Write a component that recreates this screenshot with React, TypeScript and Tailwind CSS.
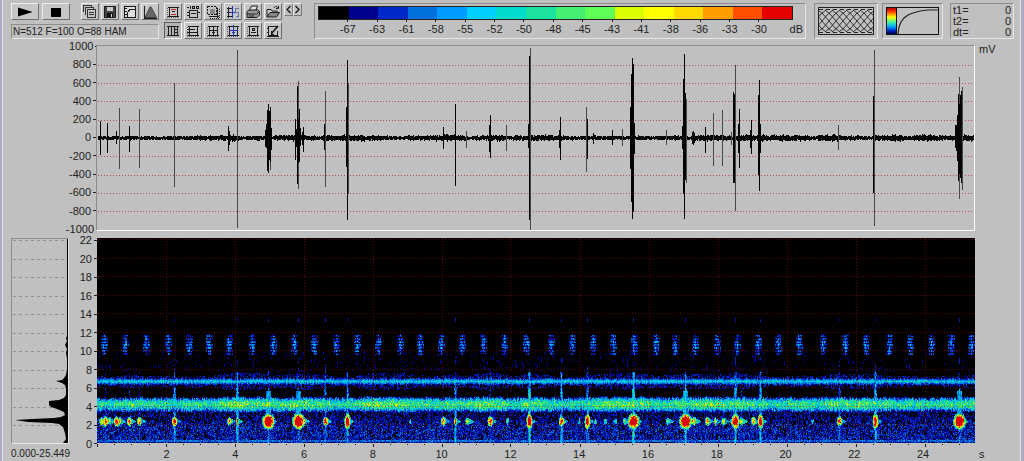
import type { ReactNode } from 'react';

const WIDTH = 877;
const WAVE_HEIGHT = 184;
const SPEC_HEIGHT = 205;
const PX_PER_SECOND = 34.45;

const scale = [
  { color: '#000000', label: '-67' },
  { color: '#00008f', label: '-63' },
  { color: '#0028c8', label: '-61' },
  { color: '#0070dc', label: '-58' },
  { color: '#009cff', label: '-55' },
  { color: '#00d0ff', label: '-52' },
  { color: '#00dccc', label: '-50' },
  { color: '#1ce2a0', label: '-48' },
  { color: '#44ee70', label: '-45' },
  { color: '#60ff55', label: '-43' },
  { color: '#dcff00', label: '-41' },
  { color: '#ffff00', label: '-38' },
  { color: '#ffd800', label: '-36' },
  { color: '#ff9c00', label: '-33' },
  { color: '#ff5000', label: '-30' },
  { color: '#e60000', label: 'dB' },
];

const amplitudes = [1000, 800, 600, 400, 200, 0, -200, -400, -600, -800, -1000];
const frequencies = [22, 20, 18, 16, 14, 12, 10, 8, 6, 4, 2, 0];
const seconds = [2, 4, 6, 8, 10, 12, 14, 16, 18, 20, 22, 24];

// x, height above zero, height below zero
const spikes = [
  [3, 17, 17], [10, 15, 15], [19, 7, 6], [32, 12, 14], [131, 12, 13], [132, 7, 7],
  [168, 8, 9], [169, 14, 10], [170, 28, 33], [171, 34, 35], [172, 27, 22], [173, 31, 24], [174, 10, 12],
  [198, 19, 22], [199, 9, 9], [200, 52, 46], [201, 19, 25], [202, 29, 24], [203, 10, 8], [205, 6, 7], [206, 11, 14],
  [227, 14, 12], [249, 31, 29], [250, 78, 82],
  [346, 11, 11], [358, 34, 48], [392, 13, 14], [393, 23, 20], [431, 14, 10], [432, 82, 82],
  [462, 8, 10], [463, 21, 22], [490, 19, 21], [496, 5, 6], [515, 8, 7], [533, 31, 31], [534, 64, 64],
  [535, 80, 81], [536, 74, 74], [537, 15, 16], [585, 12, 11], [586, 59, 56], [587, 84, 81], [588, 45, 42],
  [595, 6, 6], [596, 7, 7], [597, 5, 5], [608, 11, 15], [636, 46, 45], [637, 44, 45], [641, 14, 15], [642, 29, 30],
  [653, 8, 10], [654, 18, 16], [661, 43, 37], [662, 58, 53], [663, 14, 15], [776, 42, 55],
  [858, 13, 10], [859, 13, 13], [860, 23, 23], [861, 44, 43], [862, 34, 36], [863, 43, 40], [864, 47, 45],
];

const softSpikes = [
  [22, 30, 31], [42, 29, 30], [77, 55, 49], [140, 88, 90], [173, 31, 32], [201, 57, 51], [228, 47, 49],
  [251, 55, 56], [369, 7, 10], [409, 13, 13], [433, 90, 92], [489, 31, 34], [525, 9, 8], [569, 8, 7],
  [589, 39, 45], [616, 25, 28], [625, 28, 28], [634, 6, 7], [638, 73, 73], [741, 13, 12], [777, 88, 88],
  [862, 61, 61], [865, 51, 52],
];

const pulses = [
  7, 28, 49, 71, 92, 112, 132, 155, 176, 197, 217, 239, 260, 281, 303, 323, 344, 365, 386, 407, 429, 453,
  474, 495, 515, 536, 558, 577, 597, 619, 639, 660, 680, 701, 725, 747, 768, 791, 812, 833, 853, 873,
];

// x, half width, peak level, vertical streak level
const calls = [
  [4, 2, 12, 0], [8, 2, 16, 2], [12, 2, 11, 0], [19, 2, 16, 0], [22, 2, 12, 0], [32, 2, 15, 2], [42, 2, 14, 2],
  [77, 2, 17, 5], [132, 2, 13, 0], [140, 1, 15, 6], [171, 4, 20, 4], [201, 4, 20, 4], [206, 2, 13, 0],
  [228, 2, 16, 4], [250, 2, 19, 5], [313, 2, 6, 0], [346, 2, 15, 0], [358, 1, 16, 5], [370, 2, 11, 0],
  [393, 2, 17, 3], [410, 2, 8, 0], [432, 2, 19, 7], [463, 2, 16, 6], [481, 2, 7, 0], [489, 2, 18, 5],
  [497, 2, 8, 0], [507, 2, 8, 0], [517, 2, 8, 0], [526, 2, 9, 0], [535, 4, 19, 7], [569, 2, 10, 0],
  [587, 4, 20, 6], [595, 3, 13, 0], [609, 2, 14, 0], [617, 1, 14, 0], [625, 2, 12, 2], [634, 2, 10, 0],
  [637, 3, 18, 6], [643, 2, 12, 2], [655, 2, 14, 0], [662, 2, 18, 6], [714, 2, 6, 0], [741, 2, 16, 4],
  [777, 2, 18, 6], [861, 4, 20, 4],
];

function createRandom(seed: number) {
  let state = seed;
  return () => {
    state = (state * 1664525 + 1013904223) % 4294967296;
    return state / 4294967296;
  };
}

function spikePath(items: number[][]) {
  return items.map(([x, up, down]) => `M${x} ${92 - up}h1v${up + down}h-1z`).join('');
}

function noisePath() {
  const random = createRandom(11);
  let path = '';
  let drift = 1.5;
  for (let x = 1; x < WIDTH; x++) {
    drift += (random() - 0.5) * 0.7;
    drift = Math.min(2.4, Math.max(0.8, drift));
    const up = Math.round(drift * (0.2 + random()));
    const down = Math.round(drift * (0.2 + random()));
    path += `M${x} ${91 - up}h1v${up + down + 2}h-1z`;
  }
  return path;
}

function spectrogramPaths() {
  const random = createRandom(42);
  const paths = scale.map(() => '');
  const blotches = Array.from({ length: 60 }, () => random());

  for (let x = 0; x < WIDTH; x++) {
    const slot = x / 16;
    const i = Math.floor(slot);
    const blotch = blotches[i] + (blotches[i + 1] - blotches[i]) * (slot - i);
    const column = random();
    const nearPulse = pulses.reduce((best, p) => Math.min(best, Math.abs(p - x)), 99);
    const nearCalls = calls.filter(([cx, w]) => x > cx - w - 4 && x < cx + w + 9);

    let start = 0;
    let last = 0;
    let n = random();
    for (let y = 0; y <= SPEC_HEIGHT; y++) {
      // grain is mostly two rows tall
      if (random() > 0.4) n = random();
      let v = 0;

      // faint haze between 8 and 10 kHz
      if (y > 112 && y < 134 && n > 0.95) v = 1;

      // regular pulses between 10 and 12 kHz
      if (nearPulse < 4 && y > 95 && y < 117) {
        v = Math.max(v, 5 - nearPulse * 0.8 - Math.abs(y - 106) / 6 + (n - 0.6) * 4);
        if (y % 3 === 0) v -= 2;
      }

      // narrow line at 6.7 kHz
      const line = Math.abs(y - 143);
      if (line < 10) {
        v = Math.max(v, 6.2 - line * 1.4 + (n - 0.5) * 3.2);
        if (line > 2 && line < 4 + blotch * 5 && n > 0.5) v = Math.max(v, 1 + random() * 2);
      }

      // wide band at 4.2 kHz
      const band = Math.abs(y - 165.5 - column);
      if (band < 10) {
        v = Math.max(v, 7.2 + blotch * 1.8 - (band * band) / 7.5 + (n - 0.5) * 5);
      }

      // low frequency noise
      if (y > 171) {
        const depth = Math.min(1, (y - 171) / 18);
        if (n < 0.35 + depth * 0.43) v = Math.max(v, 1 + random() * (1.3 + depth * 1.2));
        if (y > 201 && y < 204) v = Math.max(v, 2 + n * 2.6);
      }

      for (const [cx, w, peak, streak] of nearCalls) {
        const dx = x - cx;
        const dy = Math.abs(y - 183);
        const side = dx / w;
        const heat = peak - side * side * 6 - (dy * dy) / (peak > 17 ? 4.5 : 2.2) + (n - 0.5) * 5;
        if (dy < 13 && heat > 4) v = Math.max(v, heat);
        if (peak > 8 && dx > 0 && dx < w + 5 && dy < (w + 5 - dx) / 1.8) v = Math.max(v, 3 + n * 5);
        if (streak && Math.abs(dx) < 2 && y > 133) {
          v = Math.max(v, streak - (y < 150 ? 1.5 : 0) + (n - 0.6) * 4 - Math.abs(dx) * 2);
        }
        if (peak > 19 && Math.abs(dx) < 3 && y > 152 && y < 180) v = Math.max(v, 4 + n * 2.5 - Math.abs(dx) / 2);
        if (streak > 3 && dx === 0 && ((y > 79 && y < 84) || (y > 118 && n > 0.7))) v = Math.max(v, 1 + n * 2);
      }

      const level = y === SPEC_HEIGHT ? -1 : Math.max(0, Math.min(15, Math.floor(v)));
      if (level !== last) {
        if (last > 0) paths[last] += `M${x} ${start}h1V${y}h-1z`;
        start = y;
        last = level;
      }
    }
  }
  return paths;
}

const noise = noisePath();
const spectrogram = spectrogramPaths();

function Panel({ className = '', children }: { className?: string; children: ReactNode }) {
  return (
    <div className={`border border-t-[#8c8c8c] border-l-[#8c8c8c] border-r-[#e6e6e6] border-b-[#e6e6e6] ${className}`}>
      {children}
    </div>
  );
}

function ToolButton({ label, wide, pressed, children }: { label: string; wide?: boolean; pressed?: boolean; children: ReactNode }) {
  const edge = pressed
    ? 'border-t-[#606060] border-l-[#606060] border-r-white border-b-white bg-[#b4b4b4]'
    : 'border-t-[#eeeeee] border-l-[#eeeeee] border-r-[#707070] border-b-[#707070] bg-[#c6c6c6]';
  return (
    <button aria-label={label} className={`flex h-[17px] items-center justify-center border ${wide ? 'w-7' : 'w-[18px]'} ${edge}`}>
      <svg viewBox="0 0 14 14" className="h-3.5 w-3.5 shrink-0" fill="none" stroke="#1c1c1c" shapeRendering="crispEdges">
        {children}
      </svg>
    </button>
  );
}

/* Dotted window outline that most of the second button group shares */
function Frame() {
  return (
    <>
      <path d="M3.5 2v10M11.5 2v10M2 2.5h11M2 11.5h11" />
      <path d="M1.5 3v10M1 12.5h12" strokeDasharray="1 1" stroke="#666" />
    </>
  );
}

function Toolbar() {
  return (
    <div className="flex flex-col gap-0.5">
      <div className="flex">
        <div className="flex w-[153px] gap-[3px]">
          <ToolButton label="Play" wide>
            <path d="M0 2.5L15 7L0 11.5z" fill="#000" stroke="none" shapeRendering="auto" />
          </ToolButton>
          <ToolButton label="Stop" wide>
            <path d="M2 3h10v9H2z" fill="#000" stroke="none" />
          </ToolButton>
          <div className="ml-2 flex gap-0.5">
            <ToolButton label="Copy view">
              <path d="M4.5 4.5h8v8h-8zM2.5 9.5v-7h8v2M.5 7V.5h8v2M6 7.5h5M6 9.5h5" stroke="#333" />
            </ToolButton>
            <ToolButton label="Save">
              <path d="M1.5 1.5h11v11h-11z" fill="#444" />
              <path d="M4 2h6v4H4z" fill="#ccc" stroke="none" />
              <path d="M4 8h6v4H4z" fill="#111" stroke="none" />
              <path d="M8 9h1v3H8z" fill="#ddd" stroke="none" />
            </ToolButton>
            <ToolButton label="Transfer curve">
              <path d="M1.5 1.5h11v11h-11z" fill="#ddd" />
              <path d="M4.5 12V8l1-2l2-2h4" />
              <path d="M2 3.5h2M2 6.5h2M2 9.5h2" />
            </ToolButton>
            <ToolButton label="Window function">
              <path d="M1.5 1v12h12" />
              <path d="M2 12.5L7 2h1l5.5 10.5z" fill="#666" stroke="#444" shapeRendering="auto" />
            </ToolButton>
          </div>
        </div>
        <div className="flex gap-0.5">
          <ToolButton label="Cut selection">
            <Frame />
            <path d="M5 4.5h5M5 9.5h5" stroke="#c22" />
            <path d="M6 6.5h3" />
          </ToolButton>
          <ToolButton label="Range 100">
            <path d="M3.5 5.5h8v7h-8zM1 7.5h2M1 10.5h2M12 7.5h2M5 8.5h5M1 2.5h2M4.5 1v3M6.5 1.5h2v2h-2zM10.5 1.5h2v2h-2z" />
          </ToolButton>
          <ToolButton label="Select area">
            <path d="M1.5 1.5h9v8h-9z" strokeDasharray="2 1" />
            <path d="M4 4h5v5H4z" fill="#888" stroke="none" />
            <path d="M11.5 3v10M3 11.5h10" />
            <path d="M13.5 4v10M4 13.5h10" strokeDasharray="1 1" />
          </ToolButton>
          <ToolButton label="Spectrum cursor">
            <path d="M2.5 2v11M1 3.5h5M1 7.5h5M1 11.5h5" />
            <path d="M6.5 1v12M4 7.5h6" stroke="#2233bb" />
            <path d="M12.5 3.5h-3v4h3v4h-3" stroke="#6674aa" />
          </ToolButton>
          <ToolButton label="Print">
            <g shapeRendering="auto">
              <path d="M3 6L5.5 1h6L9.5 6" fill="#ddd" />
              <path d="M1 6.5L3 5h9l1.5 1.5v3.5L11 12.5H1z" fill="#999" />
              <path d="M1 9h9.5l3-2.5M3 11h5" />
            </g>
          </ToolButton>
          <ToolButton label="Open">
            <g shapeRendering="auto">
              <path d="M1 12V4.5h4l1 1.5h5v2" fill="#ccc" />
              <path d="M1 12l3-4.5h9.5L10.5 12z" fill="#888" />
              <path d="M8 3c1-2 3-2 4 0M12.5 1v2.5H10" />
            </g>
          </ToolButton>
          <div className="flex">
            <button aria-label="Previous" className="h-[13px] w-[9px] border border-t-[#eee] border-l-[#eee] border-r-[#777] border-b-[#777]">
              <svg viewBox="0 0 7 11" className="block h-[11px] w-[7px]" fill="none" stroke="#111" strokeWidth="1.2"><path d="M5.5 2L2 5.5L5.5 9" /></svg>
            </button>
            <button aria-label="Next" className="h-[13px] w-[9px] border border-t-[#eee] border-l-[#eee] border-r-[#777] border-b-[#777]">
              <svg viewBox="0 0 7 11" className="block h-[11px] w-[7px]" fill="none" stroke="#111" strokeWidth="1.2"><path d="M1.5 2L5 5.5L1.5 9" /></svg>
            </button>
          </div>
        </div>
      </div>

      <div className="flex">
        <Panel className="mt-0.5 mr-[5px] h-[15px] w-[148px] overflow-hidden px-px text-[10px] leading-[13px] whitespace-nowrap">
          N=512 F=100 O=88 HAM
        </Panel>
        <div className="flex gap-0.5">
          <ToolButton label="Vertical cursors" pressed>
            <path d="M2.5 2v10M5.5 2v10M8.5 2v10M11.5 2v10M1 2.5h12M1 11.5h12M9 5.5h2M9 8.5h2" />
          </ToolButton>
          <ToolButton label="Horizontal cursors">
            <Frame />
            <path d="M4 5.5h5M4 8.5h7M1 5.5h2M1 8.5h2" />
          </ToolButton>
          <ToolButton label="Cross cursor">
            <Frame />
            <path d="M7.5 3v8M3 6.5h9M6 8.5h3" />
          </ToolButton>
          <ToolButton label="Linked cursor">
            <Frame />
            <path d="M7.5 1v12M3 6.5h9" stroke="#2233bb" />
            <path d="M6 8.5h3" stroke="#2233bb" />
          </ToolButton>
          <ToolButton label="Marker">
            <Frame />
            <path d="M6.5 4.5h2v2h-2zM5 8.5h5" />
          </ToolButton>
          <ToolButton label="Edit marks">
            <path d="M11 2.5H2.5v9h9V7M1 4.5h1M1 8.5h1M1 12.5h12" />
            <path d="M5.5 9.5L12 2" shapeRendering="auto" strokeWidth="1.8" />
            <path d="M5 7v3h3" />
          </ToolButton>
        </div>
      </div>
    </div>
  );
}

function ColorScale() {
  return (
    <Panel className="h-9 min-w-0 flex-1 pt-0.5 pl-[3px]">
      <div className="mr-3 flex h-3.5 border border-[#222]">
        {scale.map((step) => (
          <div key={step.color} className="flex-1" style={{ backgroundColor: step.color }} />
        ))}
      </div>
      <div className="flex pl-[15px]">
        {scale.map((step) => (
          <div key={step.label} className={`flex flex-1 flex-col ${step.label === 'dB' ? 'items-end pr-0.5' : 'items-center'}`}>
            <span className={`h-0.5 w-px ${step.label === 'dB' ? '' : 'bg-[#222]'}`} />
            <span className="leading-[14px]">{step.label}</span>
          </div>
        ))}
      </div>
    </Panel>
  );
}

function Lattice() {
  const lines = Array.from({ length: 11 }, (_, i) => i * 7 - 21);
  return (
    <Panel className="h-9 w-16 p-[3px]">
      <svg viewBox="0 0 56 28" preserveAspectRatio="none" className="h-7 w-full" fill="none" stroke="#222">
        <rect x="0.5" y="0.5" width="55" height="27" />
        <path d={lines.map((x) => `M${x} 3l5 4l6 7l6 7l5 4M${x} 25l5-4l6-7l6-7l5-4`).join('')} strokeWidth="0.9" />
        <path d="M1 2.5h54M1 25.5h54" strokeDasharray="4 3" />
      </svg>
    </Panel>
  );
}

function GammaCurve() {
  return (
    <Panel className="ml-1 h-9 w-[61px] p-[3px]">
      <svg viewBox="0 0 53 28" preserveAspectRatio="none" className="h-7 w-full" fill="none">
        <defs>
          <linearGradient id="rainbow" x1="0" y1="0" x2="0" y2="1">
            <stop offset="0" stopColor="#c00000" />
            <stop offset="0.15" stopColor="#ff4000" />
            <stop offset="0.35" stopColor="#ffff00" />
            <stop offset="0.55" stopColor="#40f0a0" />
            <stop offset="0.72" stopColor="#00a0ff" />
            <stop offset="0.88" stopColor="#0020c0" />
            <stop offset="1" stopColor="#000040" />
          </linearGradient>
        </defs>
        <rect x="1" y="1" width="9" height="26" fill="url(#rainbow)" />
        <path d="M0.5 0.5h52v27h-52zM10.5 1v26" stroke="#111" shapeRendering="crispEdges" />
        <path d="M12 27L13 20L15 15L18 11L22 8L27 6L34 4L42 3H52" stroke="#222" strokeWidth="1.2" />
      </svg>
    </Panel>
  );
}

function Readout() {
  return (
    <Panel className="ml-[7px] h-9 w-16 px-0.5 pt-px">
      <dl className="leading-[11px]">
        {['t1=', 't2=', 'dt='].map((name) => (
          <div key={name} className="flex justify-between">
            <dt>{name}</dt>
            <dd>0</dd>
          </div>
        ))}
      </dl>
    </Panel>
  );
}

function AxisLabels({ values, className }: { values: number[]; className: string }) {
  return (
    <div className={`flex flex-col justify-between ${className}`}>
      {values.map((value) => (
        <div key={value} className="flex h-2 items-center justify-end gap-0.5 leading-2">
          <span>{value}</span>
          <span className="h-px w-[3px] bg-[#222]" />
        </div>
      ))}
    </div>
  );
}

function Waveform() {
  return (
    <div className="border border-t-[#8c8c8c] border-l-[#8c8c8c] border-r-white border-b-white">
      <svg viewBox={`0 0 ${WIDTH} ${WAVE_HEIGHT}`} preserveAspectRatio="none" className="block h-[184px] w-full" shapeRendering="crispEdges">
        {amplitudes.slice(1, -1).map((value) => value !== 0 && (
          <path key={value} d={`M1 ${Math.round(92 - value * 0.0915)}.5H${WIDTH}`} stroke="#b85050" strokeDasharray="1 2" />
        ))}
        <path d={noise} fill="#050505" />
        <path d={spikePath(softSpikes)} fill="#484848" />
        <path d={spikePath(spikes)} fill="#050505" />
      </svg>
    </div>
  );
}

function AverageSpectrum() {
  return (
    <Panel>
      <svg viewBox="0 0 56 204" preserveAspectRatio="none" className="block h-[204px] w-full">
        {frequencies.slice(0, -1).map((value, i) => (
          <path key={value} d={`M1 ${Math.round(1 + i * 18.5)}.5h54`} stroke="#929292" strokeDasharray="3 3" shapeRendering="crispEdges" />
        ))}
        <path
          d="M55 0V97L54 99L55 102L53 106L55 110L54 114L55 120V130L54 136L52 139L50 141L44 142L50 144L53 146L54 150V156L52 159L47 161L37 162V166L39 168L45 170L52 173L53 176L49 178L42 179L20 180L3 181L16 183L40 184L47 185L51 188L53 194L54 200L51 204H56V0z"
          fill="#000"
        />
      </svg>
    </Panel>
  );
}

function Spectrogram() {
  return (
    <svg viewBox={`0 0 ${WIDTH} ${SPEC_HEIGHT}`} preserveAspectRatio="none" className="block h-[205px] w-full bg-[#030000]" shapeRendering="crispEdges">
      {spectrogram.map((d, i) => d && <path key={i} d={d} fill={scale[i].color} opacity="0.95" />)}
      <g stroke="#8c1010" strokeDasharray="1 2" opacity="0.6">
        {frequencies.slice(0, -1).map((value, i) => (
          <path key={value} d={`M0 ${Math.round(1 + i * 18.5)}.5H${WIDTH}`} />
        ))}
        {seconds.map((value) => (
          <path key={value} d={`M${Math.round(value * PX_PER_SECOND)}.5 0V${SPEC_HEIGHT}`} />
        ))}
      </g>
    </svg>
  );
}

function TimeAxis() {
  return (
    <div>
      <svg viewBox={`0 0 ${WIDTH} 3`} preserveAspectRatio="none" className="block h-[3px] w-full" shapeRendering="crispEdges">
        {Array.from({ length: 51 }, (_, i) => (
          <path key={i} d={`M${Math.round((i * PX_PER_SECOND) / 2)}.5 0v${i % 4 === 0 ? 3 : 1}`} stroke="#222" />
        ))}
      </svg>
      {/* each cell is two seconds wide, the rest is the tail after 25 s */}
      <div className="flex">
        <div className="w-[4%] shrink-0" />
        {seconds.map((value) => (
          <span key={value} className="flex-1 text-center leading-[14px]">{value}</span>
        ))}
        <div className="w-[2%] shrink-0" />
      </div>
    </div>
  );
}

export default function App() {
  return (
    <div className="min-h-screen bg-[#aaaac4] pr-[3px] pl-0.5 font-['Liberation_Sans',Arial,sans-serif] text-[11px] text-[#222]">
      <main className="min-h-screen border-r border-l border-[#e4e4e4] bg-[#c0c0c0] pt-[3px] pl-2">
        <header className="flex pr-1.5">
          <Toolbar />
          <div className="ml-3 flex min-w-0 flex-1 gap-2">
            <ColorScale />
            <div className="flex">
              <Lattice />
              <GammaCurve />
              <Readout />
            </div>
          </div>
        </header>

        <div className="mt-1.5 grid grid-cols-[58px_27px_1fr_45px]">
          <div />
          <AxisLabels values={amplitudes} className="-mt-[3px] -mb-0.5" />
          <Waveform />
          <div className="-mt-1 pl-1">mV</div>
        </div>

        <div className="mt-[7px] grid grid-cols-[58px_28px_1fr_45px]">
          <AverageSpectrum />
          <AxisLabels values={frequencies} className="-mt-0.5 -mb-1" />
          <Spectrogram />
          <div />
          <div className="col-span-2 pt-[3px] text-[10px] leading-[14px]">0.000-25.449</div>
          <TimeAxis />
          <div className="pt-[3px] pl-1 leading-[14px]">s</div>
        </div>
      </main>
    </div>
  );
}
